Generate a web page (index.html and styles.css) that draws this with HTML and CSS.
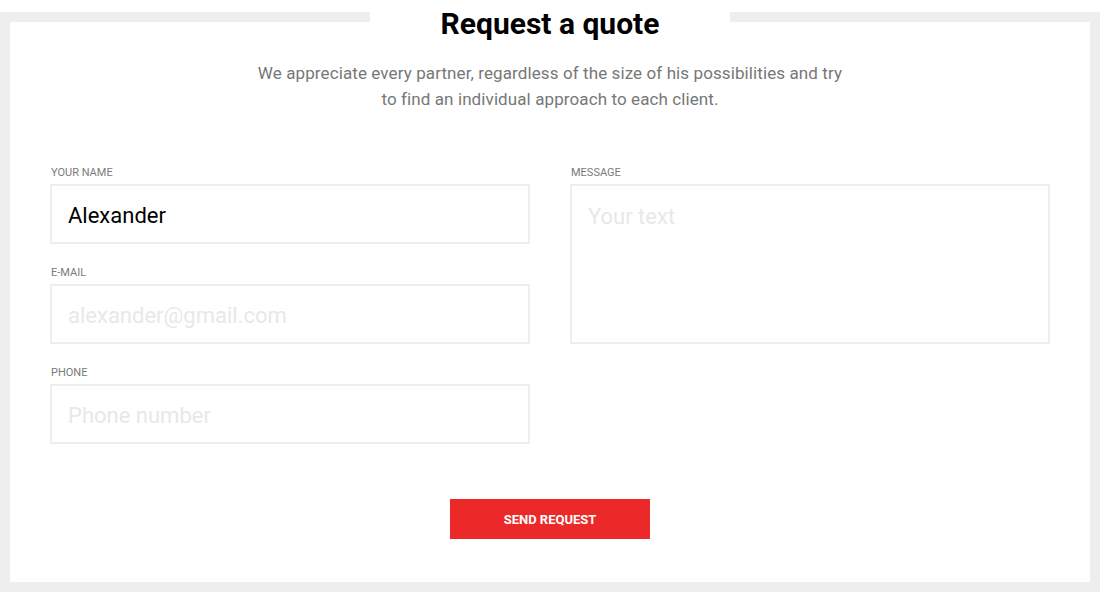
FILE: index.html
```html
<!DOCTYPE html>
<html lang="en">
<head>
<meta charset="utf-8">
<title>Request a quote</title>
<link rel="stylesheet" href="styles.css">
</head>
<body>
<form class="quote">
  <fieldset class="frame">
    <legend class="title">Request a quote</legend>
    <p class="lead">We appreciate every partner, regardless of the size of his possibilities and try<br>to find an individual approach to each client.</p>
    <div class="grid">
      <div class="col">
        <label class="field">
          <span class="label">Your name</span>
          <input class="input" type="text" value="Alexander">
        </label>
        <label class="field">
          <span class="label">E-mail</span>
          <input class="input" type="email" placeholder="alexander@gmail.com">
        </label>
        <label class="field">
          <span class="label">Phone</span>
          <input class="input" type="tel" placeholder="Phone number">
        </label>
      </div>
      <div class="col">
        <label class="field">
          <span class="label">Message</span>
          <textarea class="input area" placeholder="Your text"></textarea>
        </label>
      </div>
    </div>
    <div class="actions">
      <button class="btn" type="button">Send request</button>
    </div>
  </fieldset>
</form>
</body>
</html>
```

FILE: styles.css
```css
* { box-sizing: border-box; }
html, body { margin: 0; padding: 0; background: #fff; }
body {
  font-family: Roboto, "Liberation Sans", sans-serif;
  color: #000;
  width: 1100px;
  height: 592px;
  overflow: hidden;
}
.quote { margin: 0; }
.frame {
  margin: 0;
  padding: 26px 30px 43px;
  border: 10px solid #eeeeee;
  min-width: 0;
  height: 592px;
}
.title {
  margin: 0 auto;
  width: 360px;
  height: 34px;
  padding: 0;
  text-align: center;
  font-size: 30px;
  font-weight: 700;
  line-height: 47px;
  color: #000;
  background: #fff;
}
.lead {
  margin: 0;
  text-align: center;
  font-size: 17px;
  letter-spacing: 0.1px;
  line-height: 26px;
  color: #777;
}
.grid {
  margin-top: 53px;
  display: grid;
  grid-template-columns: 480px 480px;
  column-gap: 40px;
  justify-content: center;
}
.col {
  display: flex;
  flex-direction: column;
  gap: 21px;
}
.field { display: block; }
.label {
  display: block;
  font-size: 11px;
  line-height: 14px;
  margin-bottom: 5px;
  padding: 1px 0 0 1px;
  height: 14px;
  text-transform: uppercase;
  color: #7a7a7a;
}
.input {
  display: block;
  width: 100%;
  height: 60px;
  margin: 0;
  padding: 2px 16px 0;
  border: 2px solid #eeeeee;
  border-radius: 0;
  outline: none;
  background: #fff;
  font-family: inherit;
  font-size: 22px;
  color: #000;
}
.input::placeholder { color: #e8e8e8; opacity: 1; }
.area {
  height: 160px;
  padding-top: 18px;
  line-height: 26px;
  resize: none;
}
.actions {
  margin-top: 55px;
  display: flex;
  justify-content: center;
}
.btn {
  width: 200px;
  height: 40px;
  border: 0;
  border-radius: 0;
  background: #ec2929;
  color: #fff;
  font-family: inherit;
  font-size: 13px;
  font-weight: 700;
  text-transform: uppercase;
  cursor: pointer;
}
```
